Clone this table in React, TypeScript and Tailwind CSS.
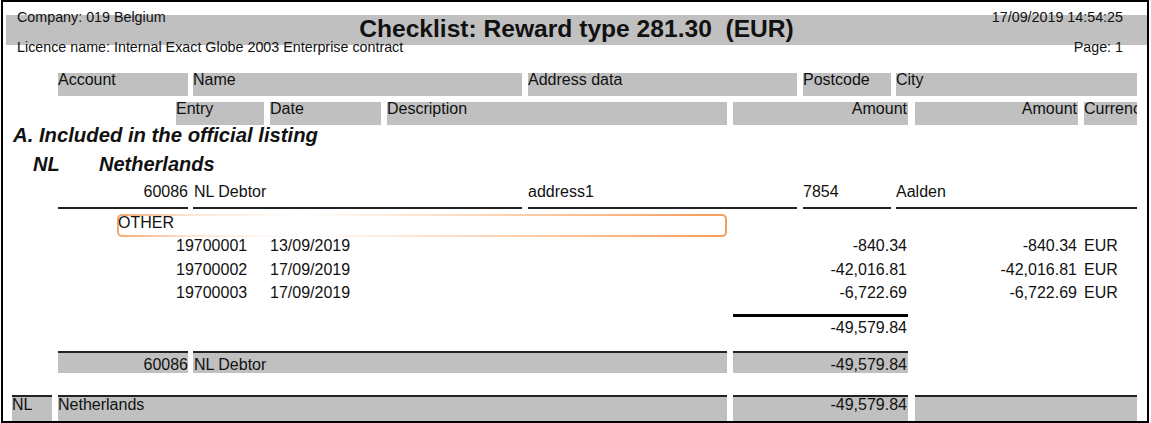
const bar = "bg-[#c0c0c0] h-full shrink-0";

const entries = [
  { entry: "19700001", date: "13/09/2019", amount: "-840.34" },
  { entry: "19700002", date: "17/09/2019", amount: "-42,016.81" },
  { entry: "19700003", date: "17/09/2019", amount: "-6,722.69" },
];

export default function App() {
  return (
    <div className="w-[1151px] h-[423px] bg-white text-[#111] font-['Liberation_Sans',Arial,sans-serif]">
      <div className="ml-[1px] w-[1148px] h-[423px] border-2 border-black overflow-hidden">
        {/* Page header */}
        <div className="mt-[7px] flex justify-between h-[16px] leading-[16px] text-[14.3px] pl-[14px] pr-[24px]">
          <span>Company: 019 Belgium</span>
          <span>17/09/2019 14:54:25</span>
        </div>
        <div className="-mt-[10px] ml-[3px] h-[30px] bg-[#c0c0c0] text-center text-[24.6px] font-bold leading-[28px] whitespace-pre">
          Checklist: Reward type 281.30  (EUR)
        </div>
        <div className="-mt-[6px] flex justify-between h-[16px] leading-[16px] text-[14.3px] pl-[14px] pr-[24px]">
          <span>Licence name: Internal Exact Globe 2003 Enterprise contract</span>
          <span>Page: 1</span>
        </div>

        {/* Column headers */}
        <div className="mt-[18px] flex h-[23px] text-[16px] leading-[13px]">
          <div className={`ml-[55px] w-[130px] ${bar}`}>Account</div>
          <div className={`ml-[5px] w-[329px] ${bar}`}>Name</div>
          <div className={`ml-[6px] w-[269px] ${bar}`}>Address data</div>
          <div className={`ml-[6px] w-[88px] ${bar}`}>Postcode</div>
          <div className={`ml-[5px] w-[241px] ${bar}`}>City</div>
        </div>
        <div className="mt-[6px] flex h-[23px] text-[16px] leading-[14px]">
          <div className={`ml-[173px] w-[88px] ${bar}`}>Entry</div>
          <div className={`ml-[6px] w-[111px] ${bar}`}>Date</div>
          <div className={`ml-[6px] w-[340px] ${bar}`}>Description</div>
          <div className={`ml-[6px] w-[175px] text-right pr-[1px] ${bar}`}>Amount</div>
          <div className={`ml-[7px] w-[163px] text-right pr-[1px] ${bar}`}>Amount</div>
          <div className={`ml-[6px] w-[53px] overflow-hidden whitespace-nowrap ${bar}`}>Currency</div>
        </div>

        {/* Section */}
        <div className="h-[20px] leading-[20px] text-[20.3px] font-bold italic pl-[10px]">
          A. Included in the official listing
        </div>
        <div className="mt-[9px] flex h-[20px] leading-[20px] text-[20px] font-bold italic">
          <span className="ml-[30px] w-[66px]">NL</span>
          <span>Netherlands</span>
        </div>

        {/* Debtor */}
        <div className="flex h-[35px] text-[16px] leading-[16px]">
          <div className="ml-[55px] w-[130px] border-b-2 border-[#222] pt-[10px] text-right">60086</div>
          <div className="ml-[5px] w-[329px] border-b-2 border-[#222] pt-[10px] pl-[1px]">NL Debtor</div>
          <div className="ml-[6px] w-[269px] border-b-2 border-[#222] pt-[10px]">address1</div>
          <div className="ml-[6px] w-[88px] border-b-2 border-[#222] pt-[10px]">7854</div>
          <div className="ml-[5px] w-[241px] border-b-2 border-[#222] pt-[10px]">Aalden</div>
        </div>

        <div className="mt-[5px] ml-[114px] w-[610px] h-[23px] rounded-[5px] border-2 border-transparent text-[16px] leading-[13px] [background:linear-gradient(#fff,#fff)_padding-box,linear-gradient(to_right,#f3a66e,#fde6d6_12%,#fff_30%,#fbc9a2_70%,#f79a58)_border-box]">
          <span className="-ml-[1px]">OTHER</span>
        </div>

        <div className="-mt-[3px] text-[16px]">
          {entries.map((e) => (
            <div key={e.entry} className="flex h-[23.5px] leading-[23.5px]">
              <span className="ml-[173px] w-[94px] shrink-0">{e.entry}</span>
              <span className="w-[463px] shrink-0">{e.date}</span>
              <span className="w-[175px] shrink-0 text-right pr-[1px]">{e.amount}</span>
              <span className="ml-[7px] w-[163px] shrink-0 text-right pr-[1px]">{e.amount}</span>
              <span className="ml-[6px]">EUR</span>
            </div>
          ))}
        </div>

        {/* Totals */}
        <div className="mt-[9.5px] ml-[730px] w-[175px] border-t-[3px] border-black pt-[3px] text-[16px] leading-[16px] text-right pr-[1px]">
          -49,579.84
        </div>

        <div className="mt-[15px] flex h-[22px] text-[16px] leading-[16px]">
          <div className={`ml-[55px] w-[130px] border-t-2 border-[#222] pt-[4px] text-right ${bar}`}>60086</div>
          <div className={`ml-[5px] w-[534px] border-t-2 border-[#222] pt-[4px] pl-[1px] ${bar}`}>NL Debtor</div>
          <div className={`ml-[6px] w-[175px] border-t-2 border-[#222] pt-[4px] text-right pr-[1px] ${bar}`}>-49,579.84</div>
        </div>

        <div className="mt-[22px] flex h-[26px] text-[16px] leading-[16px]">
          <div className={`ml-[9px] w-[40px] border-t-2 border-[#222] ${bar}`}>NL</div>
          <div className={`ml-[6px] w-[669px] border-t-2 border-[#222] ${bar}`}>Netherlands</div>
          <div className={`ml-[6px] w-[175px] border-t-2 border-[#222] text-right pr-[1px] ${bar}`}>-49,579.84</div>
          <div className={`ml-[7px] w-[222px] border-t-2 border-[#222] ${bar}`}></div>
        </div>
      </div>
    </div>
  );
}
